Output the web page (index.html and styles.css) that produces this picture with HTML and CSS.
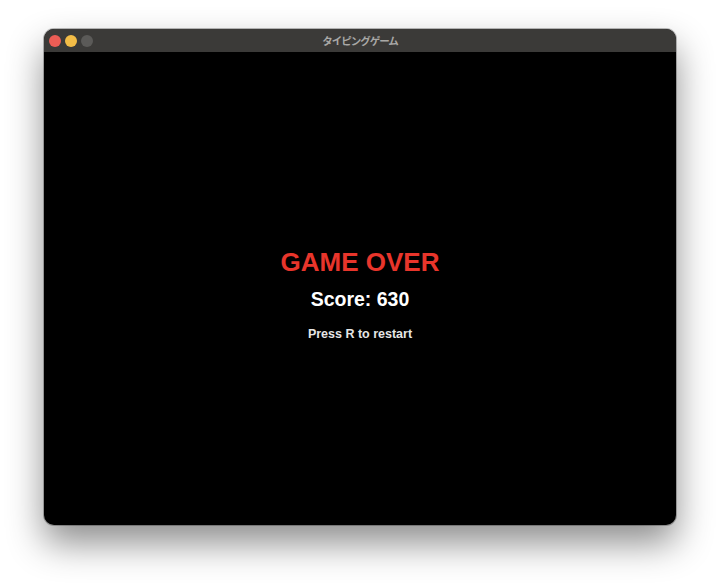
FILE: index.html
```html
<!DOCTYPE html>
<html lang="ja">
<head>
<meta charset="utf-8">
<title>タイピングゲーム</title>
<link rel="stylesheet" href="styles.css">
</head>
<body>
<div class="window">
  <div class="titlebar">
    <div class="lights">
      <span class="light red"></span>
      <span class="light yellow"></span>
      <span class="light gray"></span>
    </div>
    <div class="title">タイピングゲーム</div>
  </div>
  <div class="content">
    <div class="gameover">GAME OVER</div>
    <div class="score">Score: 630</div>
    <div class="restart">Press R to restart</div>
  </div>
</div>
</body>
</html>
```

FILE: styles.css
```css
html, body {
  margin: 0;
  padding: 0;
  background: #ffffff;
  width: 720px;
  height: 584px;
  overflow: hidden;
}
body {
  padding-top: 29px;
  padding-left: 44px;
  box-sizing: border-box;
}
.window {
  width: 632px;
  height: 496px;
  border-radius: 10px;
  background: #000;
  overflow: hidden;
  display: flex;
  flex-direction: column;
  box-shadow: 0 18px 36px rgba(0, 0, 0, 0.45), 0 0 0 1px rgba(0, 0, 0, 0.25);
}
.titlebar {
  height: 23px;
  background: #3b3a38;
  position: relative;
  flex: none;
  display: flex;
  align-items: center;
  justify-content: center;
}
.lights {
  position: absolute;
  left: 5px;
  top: 6px;
  display: flex;
  gap: 4px;
}
.light {
  width: 12px;
  height: 12px;
  border-radius: 50%;
  display: block;
}
.red { background: #ec5d55; }
.yellow { background: #f3bd47; }
.gray { background: #5b5a58; }
.title {
  font-family: "Noto Sans CJK JP", "Liberation Sans", sans-serif;
  font-size: 10.5px;
  font-weight: bold;
  color: #a9a8a6;
  letter-spacing: -1px;
  line-height: 1;
  margin-top: 1px;
}
.content {
  flex: 1;
  display: flex;
  flex-direction: column;
  align-items: center;
  padding-top: 195px;
  font-family: "Liberation Sans", Arial, sans-serif;
  font-weight: bold;
}
.gameover {
  color: #e8352b;
  font-size: 26px;
  line-height: 30px;
}
.score {
  color: #ffffff;
  font-size: 19.5px;
  line-height: 22px;
  margin-top: 11px;
}
.restart {
  color: #e6e6e6;
  font-size: 12.5px;
  line-height: 15px;
  margin-top: 17px;
}
```
